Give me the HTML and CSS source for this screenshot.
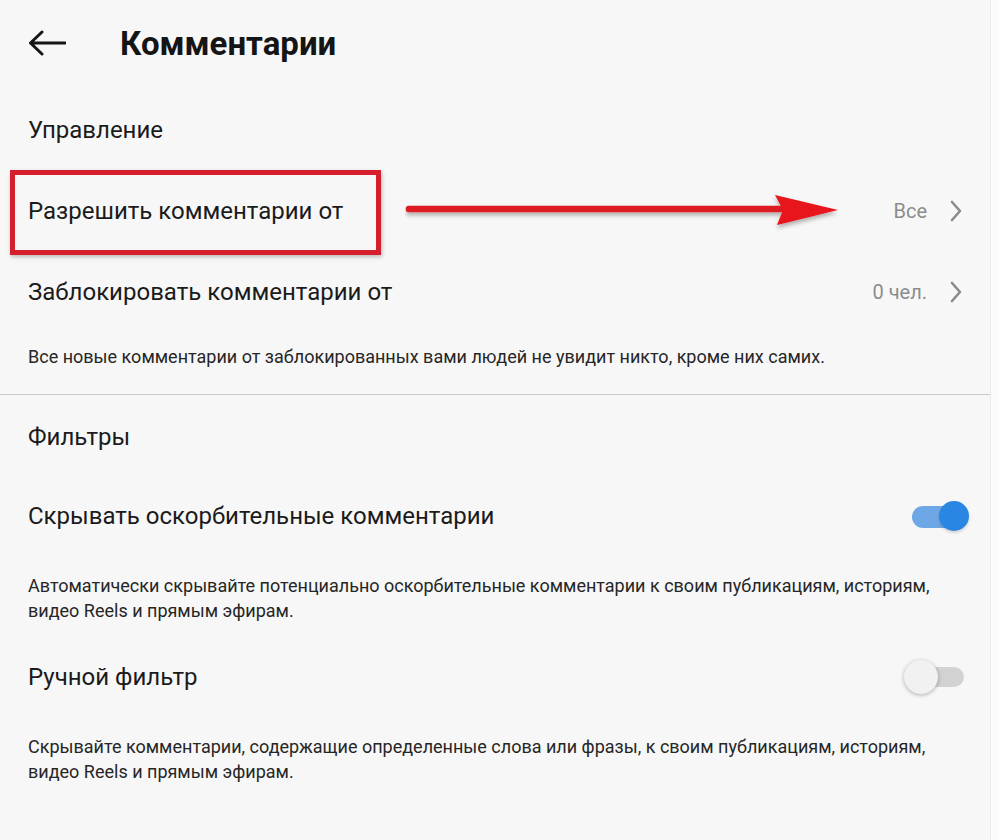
FILE: index.html
```html
<!DOCTYPE html>
<html lang="ru">
<head>
  <meta charset="UTF-8" />
  <meta name="viewport" content="width=device-width, initial-scale=1.0"/>
  <title>Комментарии</title>
  <link rel="stylesheet" href="styles.css">
</head>
<body>

  <div class="screen">
    <div class="header">
      <svg class="back" width="38" height="26" viewBox="0 0 38 26">
        <path d="M37 13H3M14 2L2.5 13L14 24" fill="none" stroke="#151515" stroke-width="3" stroke-linecap="round" stroke-linejoin="round"/>
      </svg>
      <h1>Комментарии</h1>
    </div>

    <div class="group-title first">Управление</div>

    <div class="row">
      <span class="label">Разрешить комментарии от</span>
      <span class="value">Все</span>
      <svg class="chevron" width="14" height="24" viewBox="0 0 14 24">
        <path d="M3 3L11 12L3 21" fill="none" stroke="#8a8a8a" stroke-width="2.6" stroke-linecap="round" stroke-linejoin="round"/>
      </svg>
      <!-- annotation -->
      <div class="mark-box"></div>
      <svg class="mark-arrow" width="440" height="40" viewBox="0 0 440 40">
        <defs>
          <filter id="sh" x="-5%" y="-50%" width="110%" height="200%">
            <feDropShadow dx="0" dy="3" stdDeviation="2" flood-color="#000" flood-opacity="0.3"/>
          </filter>
        </defs>
        <g filter="url(#sh)">
          <path d="M4 17H380" stroke="#dc1a20" stroke-width="6.5" stroke-linecap="round"/>
          <path d="M370 3L433 18L372 33L378 18Z" fill="#e8141a"/>
        </g>
      </svg>
    </div>

    <div class="row tall">
      <span class="label">Заблокировать комментарии от</span>
      <span class="value">0 чел.</span>
      <svg class="chevron" width="14" height="24" viewBox="0 0 14 24">
        <path d="M3 3L11 12L3 21" fill="none" stroke="#8a8a8a" stroke-width="2.6" stroke-linecap="round" stroke-linejoin="round"/>
      </svg>
    </div>

    <p class="note one">Все новые комментарии от заблокированных вами людей не увидит никто, кроме них самих.</p>

    <div class="divider"></div>

    <div class="group-title">Фильтры</div>

    <div class="row">
      <span class="label">Скрывать оскорбительные комментарии</span>
      <div class="toggle on"><span class="track"></span><span class="knob"></span></div>
    </div>

    <p class="note">Автоматически скрывайте потенциально оскорбительные комментарии к своим публикациям, историям, видео Reels и прямым эфирам.</p>

    <div class="row">
      <span class="label">Ручной фильтр</span>
      <div class="toggle off"><span class="track"></span><span class="knob"></span></div>
    </div>

    <p class="note">Скрывайте комментарии, содержащие определенные слова или фразы, к своим публикациям, историям, видео Reels и прямым эфирам.</p>
  </div>

</body>
</html>
```

FILE: styles.css
```css
body {
  margin: 0;
  background: #fbfbfb;
  font-family: Roboto, "Noto Sans", sans-serif;
  color: #1b1b1b;
}

.screen {
  width: 990px;
  height: 840px;
  background: #f7f7f7;
  border-right: 1px solid #ececec;
  overflow: hidden;
}

.header {
  height: 86px;
  display: flex;
  align-items: center;
  padding-left: 28px;
}

.header .back {
  margin-right: 54px;
}

.header h1 {
  margin: 0;
  font-size: 33px;
  font-weight: 700;
  color: #151515;
}

.group-title {
  height: 84px;
  display: flex;
  align-items: center;
  padding-left: 28px;
  font-size: 24px;
}

.group-title.first {
  height: 88px;
}

.row {
  position: relative;
  height: 74px;
  display: flex;
  align-items: center;
  padding: 0 28px;
}

.row.tall {
  height: 84px;
  margin-top: 2px;
}

.row .label {
  flex: 1;
  font-size: 24px;
}

.row .value {
  font-size: 20px;
  color: #8c8c8c;
  margin-right: 22px;
}

.row .chevron {
  margin-right: -1px;
}

.note {
  margin: 0;
  padding: 20px 28px 17px;
  font-size: 18px;
  line-height: 25px;
  color: #262626;
}

.note.one {
  padding: 11px 28px 25px;
  line-height: 24px;
}

.divider {
  height: 1px;
  background: #c9c9c9;
}

.mark-box {
  position: absolute;
  left: 10px;
  top: -4px;
  width: 361px;
  height: 75px;
  border: 5px solid #d51f2c;
  box-shadow: 1px 2px 4px rgba(0, 0, 0, 0.25);
}

.mark-arrow {
  position: absolute;
  left: 405px;
  top: 18px;
}

.toggle {
  position: relative;
  width: 64px;
  height: 36px;
  margin-right: -8px;
}

.toggle .track,
.toggle .knob {
  position: absolute;
  border-radius: 50%;
}

.toggle.on .track {
  left: 6px;
  top: 8px;
  width: 44px;
  height: 22px;
  border-radius: 11px;
  background: #6ea7e6;
}

.toggle.on .knob {
  right: 1px;
  top: 3px;
  width: 30px;
  height: 30px;
  background: #2986e2;
  box-shadow: 0 2px 3px rgba(0, 0, 0, 0.15);
}

.toggle.off {
  margin-right: -6px;
}

.toggle.off .track {
  left: 18px;
  top: 8px;
  width: 42px;
  height: 20px;
  border-radius: 10px;
  background: #d2d2d2;
}

.toggle.off .knob {
  left: 0;
  top: 1px;
  width: 34px;
  height: 34px;
  background: #f1f1f1;
  box-shadow: 0 1px 4px rgba(0, 0, 0, 0.3);
}
```
